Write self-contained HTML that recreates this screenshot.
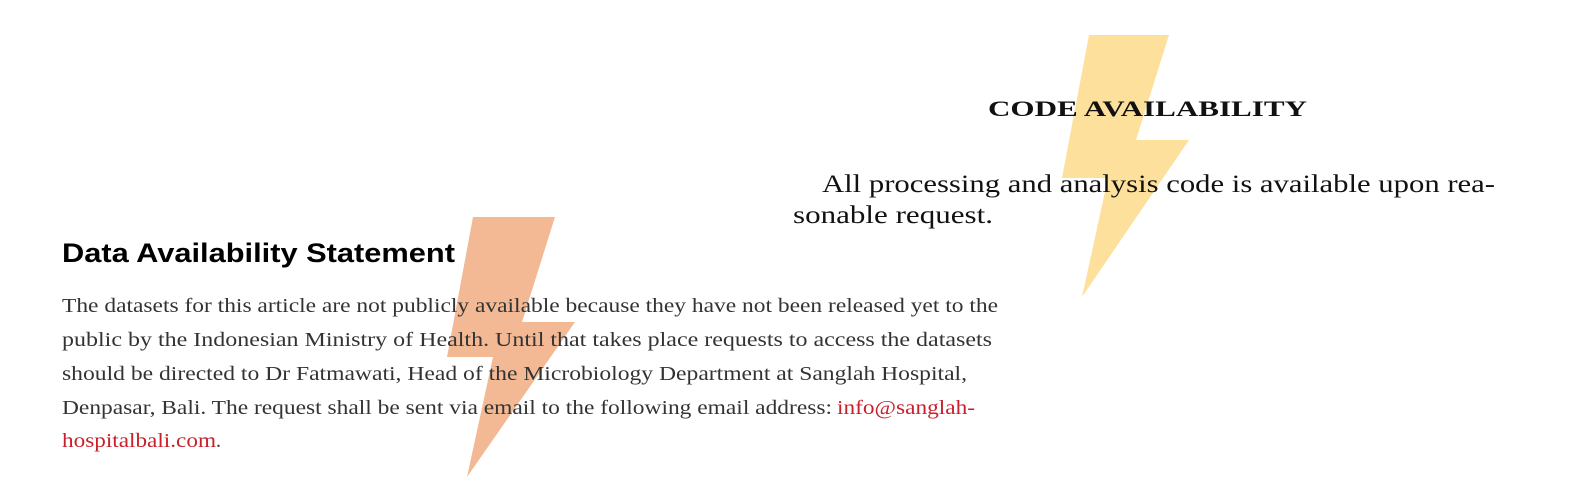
<!DOCTYPE html>
<html><head><meta charset="utf-8"><style>
html,body{margin:0;padding:0;background:#fff;width:1572px;height:482px;overflow:hidden}
svg{display:block}
</style></head><body>
<svg width="1572" height="482" viewBox="0 0 1572 482" xmlns="http://www.w3.org/2000/svg">
<polygon points="473,217 555,217 522,322 575,322 467,477 493,357 447,357" fill="#f3b994"/>
<polygon points="1089,35 1169,35 1136,140 1189,140 1082,297 1108,178 1062,178" fill="#fde09b"/>
<g font-family="'Liberation Sans', sans-serif" font-weight="bold" fill="#000">
<text x="62" y="262" font-size="27" textLength="393" lengthAdjust="spacingAndGlyphs">Data Availability Statement</text>
</g>
<g font-family="'Liberation Serif', serif" font-size="20" fill="#333">
<text x="62" y="312" textLength="936" lengthAdjust="spacingAndGlyphs">The datasets for this article are not publicly available because they have not been released yet to the</text>
<text x="62" y="346" textLength="930" lengthAdjust="spacingAndGlyphs">public by the Indonesian Ministry of Health. Until that takes place requests to access the datasets</text>
<text x="62" y="380" textLength="905" lengthAdjust="spacingAndGlyphs">should be directed to Dr Fatmawati, Head of the Microbiology Department at Sanglah Hospital,</text>
<text x="62" y="414" textLength="770" lengthAdjust="spacingAndGlyphs">Denpasar, Bali. The request shall be sent via email to the following email address:</text>
<text x="837" y="414" textLength="138" lengthAdjust="spacingAndGlyphs" fill="#c8202a">info@sanglah-</text>
<text x="62" y="447" textLength="154" lengthAdjust="spacingAndGlyphs" fill="#c8202a">hospitalbali.com</text>
<text x="216" y="447">.</text>
</g>
<g font-family="'Liberation Serif', serif" fill="#111">
<text x="988" y="116" font-size="22" font-weight="bold" textLength="319" lengthAdjust="spacingAndGlyphs">CODE AVAILABILITY</text>
<text x="822" y="192" font-size="25" textLength="673" lengthAdjust="spacingAndGlyphs">All processing and analysis code is available upon rea-</text>
<text x="793" y="223" font-size="25" textLength="200" lengthAdjust="spacingAndGlyphs">sonable request.</text>
</g>
</svg>
</body></html>
